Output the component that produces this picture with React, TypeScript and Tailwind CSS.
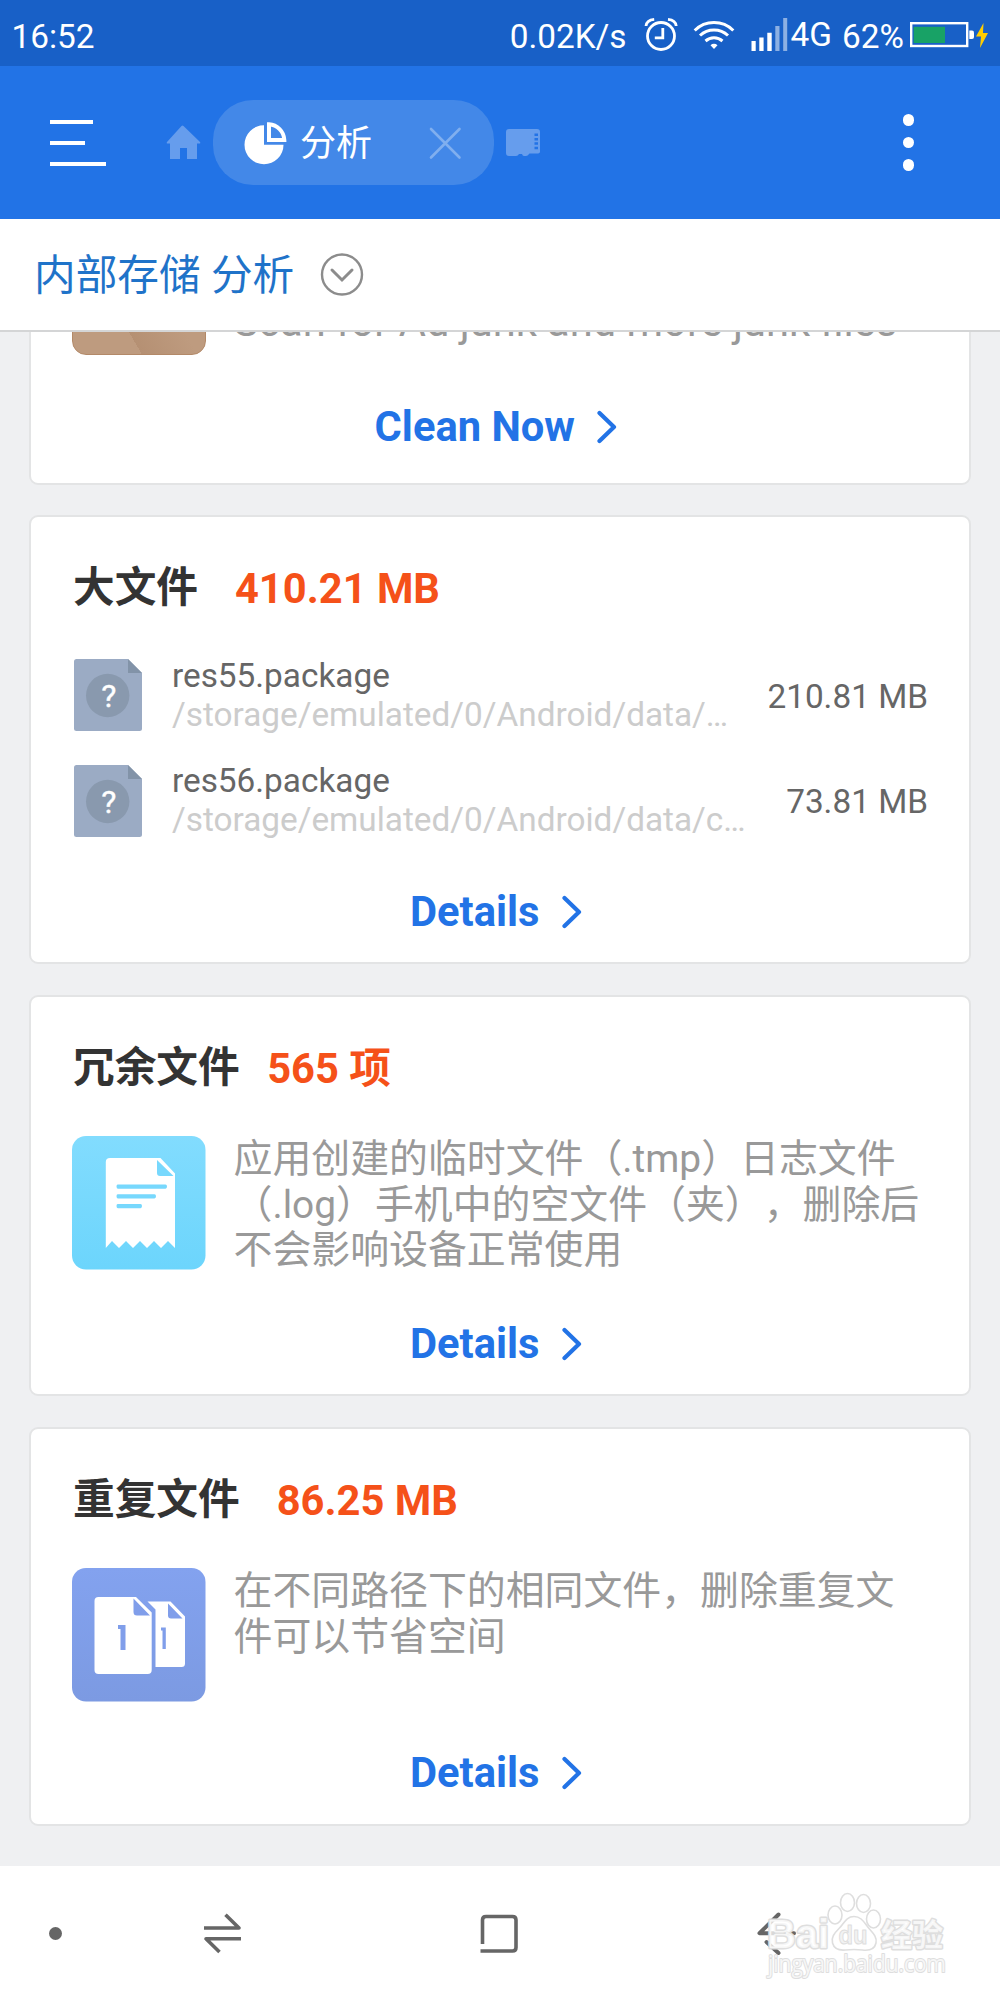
import type { ReactNode } from "react";

function StatusBar() {
  return (
    <div className="flex h-[66px] items-center bg-[#1860c7] pl-[11.500px] text-[33.33px] leading-[40px] text-white">
      <span className="pt-[7px]">16:52</span>
      <span className="ml-auto pt-[7px]">0.02K/s</span>
      <svg className="ml-[16px] h-[66px] w-[36px] shrink-0" viewBox="643 0 36 66" fill="none" stroke="#fff">
        <circle cx="661" cy="36" r="13.5" strokeWidth="2.8" />
        <path d="M662.8 28v9.800h-8" strokeWidth="2.800" />
        <path d="M646 26c.3-3.500 3-6.200 8.200-6.700M676.200 26c-.3-3.500-3-6.200-8.200-6.700" strokeWidth="2.800" />
      </svg>
      <svg className="ml-[14px] h-[66px] w-[42px] shrink-0" viewBox="693 0 42 66" fill="none" stroke="#fff" strokeWidth="3">
        <path d="M694.700 30.500a27.500 27.500 0 0 1 38.600 0M700 35.500a20.500 20.500 0 0 1 28 0M705.500 41a13 13 0 0 1 17 0" />
        <path d="M710.500 45.300a5 5 0 0 1 7 0l-3.500 3.700z" fill="#fff" stroke="none" />
      </svg>
      <svg className="ml-[15px] h-[66px] w-[38px] shrink-0" viewBox="750 0 38 66" fill="#fff">
        <path d="M751.500 41h4.200v10h-4.200zM759.300 37.500h4.300V51h-4.300zM767.300 32.700h4.400V51h-4.400z" />
        <path d="M775.300 26h4.200v25h-4.200zM783.200 18h4v33h-4z" opacity=".5" />
      </svg>
      <span className="ml-[3px] pt-[4px]">4G</span>
      <span className="ml-[10px] w-[62px] pt-[7px]">62%</span>
      <svg className="ml-[4px] mr-[10px] h-[66px] w-[82px] shrink-0" viewBox="908 0 82 66" fill="none">
        <rect x="911.200" y="23.200" width="56" height="22.800" stroke="#fff" strokeWidth="2.400" />
        <path d="M913.700 26.800H945v16.200h-31.300z" fill="#18a266" />
        <path d="M969.300 30.500h2.700q2 0 2 2v4.600q0 2-2 2h-2.700z" fill="#fff" />
        <path d="M983.500 23 976 36.500h5l-1 11.500L988 33h-5z" fill="#ffcd00" />
      </svg>
    </div>
  );
}

function Toolbar() {
  return (
    <div className="flex h-[153px] items-center bg-[#2273e6] pl-[50px]">
      <div className="flex w-[56px] flex-col gap-[16.500px] pt-[1px]">
        <i className="h-[4.500px] w-[43px] bg-white" />
        <i className="h-[4.500px] w-[35px] bg-white" />
        <i className="h-[4.500px] w-[56px] bg-white" />
      </div>
      <svg className="ml-[60px] h-[35px] w-[35px]" viewBox="166 125 35 35" fill="#669ded">
        <path d="M181.500 126q1-.8 2 0l16.500 16q1 1.500-1 1.500h-2V159h-10v-11h-7v11h-10v-15.500h-2q-2 0-1-1.500z" />
      </svg>
      <div className="ml-[11.500px] flex h-[85px] w-[281.500px] items-center rounded-[40px] bg-[#4388e8] pl-[30px]">
        <svg className="h-[44px] w-[44px]" viewBox="243 120 44 44" fill="#fff">
          <path d="M264 124.300a19.500 19.500 0 1 0 19.500 19.500H264z" />
          <path d="M269 123.300v15.600h15.300a16.500 16.500 0 0 0-15.300-15.600z" fill="none" stroke="#fff" strokeWidth="4" />
        </svg>
        <span className="ml-[13.500px] pt-[2px] text-[36px] leading-[44px] text-white">分析</span>
        <svg className="ml-[56px] h-[34px] w-[34px]" viewBox="0 0 34 34" stroke="#80afef" strokeWidth="2.600" strokeLinecap="round">
          <path d="m3 3 28.500 28.500M31.500 3 3 31.500" />
        </svg>
      </div>
      <svg className="ml-[12px] h-[28px] w-[34px]" viewBox="506 129 34 28">
        <path d="M509 129h28q3 0 3 3v19.500q0 2-3 2h-7.500q-2 2.500-3.500 2.500h-2q-1.500 0-2-2h-3q-1 2-3 2H509q-3 0-3-3v-21q0-3 3-3z" fill="#669ded" />
        <path d="M534.500 133.500h3.500v2.500h-3.500zM534.500 138h3.500v2.500h-3.500zM534.500 142.300h3.500v2.500h-3.500zM534.500 146.700h3.500v2.500h-3.500z" fill="#2273e6" />
      </svg>
      <div className="ml-auto mr-[86px] flex flex-col gap-[10.800px]">
        <i className="size-[11.500px] rounded-full bg-white" />
        <i className="size-[11.500px] rounded-full bg-white" />
        <i className="size-[11.500px] rounded-full bg-white" />
      </div>
    </div>
  );
}

function Card({ className, children }: { className: string; children: ReactNode }) {
  return (
    <section className={`mx-[29px] flex flex-col rounded-[9px] border-2 border-[#e3e4e5] bg-white ${className}`}>
      {children}
    </section>
  );
}

function Heading({ title, value, gap }: { title: string; value: string; gap: string }) {
  return (
    <h2 className="flex h-[60px] shrink-0 pl-[42px] text-[41.670px] font-bold text-[#333]">
      <span className="leading-[58px]">{title}</span>
      <span className={`leading-[60px] text-[#f55119] ${gap}`}>{value}</span>
    </h2>
  );
}

function Action({ label }: { label: string }) {
  return (
    <div className="mt-auto flex h-[60px] shrink-0 items-center justify-center gap-[22.500px] pr-[8px] text-[41.670px] leading-[60px] font-bold text-[#2273e6]">
      {label}
      <svg className="h-[34px] w-[20px]" viewBox="0 0 20 34" fill="none" stroke="#2273e6" strokeWidth="4.200" strokeLinecap="round" strokeLinejoin="round">
        <path d="m2.500 3 14.500 14-14.500 14" />
      </svg>
    </div>
  );
}

function FileRow({ name, path, size }: { name: string; path: string; size: string }) {
  return (
    <div className="flex h-[105.800px] items-start pr-[41px] pl-[43px] text-[33.330px] leading-[39px]">
      <div className="mt-[3.500px] flex h-[72px] w-[68px] shrink-0">
        <svg className="size-full" viewBox="0 0 68 72">
          <path d="M2.500 0H54l14 14v55.500q0 2.500-2.500 2.500h-63Q0 72 0 69.500v-67Q0 0 2.500 0z" fill="#9babc4" />
          <path d="M54 0v14h14z" fill="#8293a8" />
          <circle cx="33.700" cy="36.500" r="21.700" fill="#8999ae" />
          <text x="34.700" y="47.500" textAnchor="middle" fontSize="32" fontFamily="Roboto" fill="#fff" stroke="#fff" strokeWidth=".4">?</text>
        </svg>
      </div>
      <div className="ml-[30px] whitespace-nowrap">
        <div className="text-[#666]">{name}</div>
        <div className="text-[#ccc]">{path}</div>
      </div>
      <span className="mt-[21px] ml-auto whitespace-nowrap text-[#666]">{size}</span>
    </div>
  );
}

function Description({ icon, lines }: { icon: ReactNode; lines: string[] }) {
  return (
    <div className="flex h-[137px] pl-[41px]">
      {icon}
      <div className="ml-[28px] text-[38.890px] leading-[45.600px] whitespace-nowrap text-[#999] [text-spacing-trim:space-all]">
        {lines.map((l) => (
          <div key={l}>{l}</div>
        ))}
      </div>
    </div>
  );
}

function ReceiptIcon() {
  return (
    <svg className="h-[133.500px] w-[133.500px] shrink-0" viewBox="72 1136 133.500 133.500">
      <defs>
        <linearGradient id="sky" x1="0" y1="0" x2="0" y2="1">
          <stop stopColor="#82dcfe" />
          <stop offset="1" stopColor="#6cd5fc" />
        </linearGradient>
      </defs>
      <rect x="72" y="1136" width="133.500" height="133.500" rx="14" fill="url(#sky)" />
      <path d="M110 1158h50.500l14.500 15.500v74.500l-7-7-7 7-7-7-7 7-7-7-7 7-7-7-7 7-7-7-6.200 7V1162q0-4 4.200-4z" fill="#fff" />
      <path d="M157 1160v13q0 3 3 3h13.500zM118 1184.500h47.500q1.500 0 1.500 2t-1.500 2.300H118q-1.500 0-1.500-2.300t1.500-2zM118 1194.300h36.500q1.500 0 1.500 2t-1.500 2.300H118q-1.500 0-1.500-2.300t1.500-2zM118 1204h22.500q1.500 0 1.500 2t-1.500 2.300H118q-1.500 0-1.500-2.300t1.500-2z" fill="#77d8fd" />
    </svg>
  );
}

function DuplicateIcon() {
  return (
    <svg className="h-[133.500px] w-[133.500px] shrink-0" viewBox="72 1568.500 133.500 133.500">
      <defs>
        <linearGradient id="peri" x1="0" y1="0" x2="0" y2="1">
          <stop stopColor="#83a2ef" />
          <stop offset="1" stopColor="#7c9ae2" />
        </linearGradient>
      </defs>
      <rect x="72" y="1568.500" width="133.500" height="133.500" rx="14" fill="url(#peri)" />
      <path d="M98.500 1597.500h37.500l15.700 15.500v57.500q0 4-4 4H98.500q-4 0-4-4v-69q0-4 4-4z" fill="#fff" />
      <path d="M147.500 1602h23l14.500 15v47q0 3.500-3.500 3.500h-26V1610z" fill="#fff" />
      <path d="M133.500 1599v13.500q0 3.500 3.500 3.500h13zM168 1604v12q0 3 3 3h11.500z" fill="#809eea" />
      <path d="M118 1625.500h7.500v25h-5v-21H118zM161 1628h4.800v21.500h-3.300v-18.500H161z" fill="#809eea" />
    </svg>
  );
}

function Watermark() {
  return (
    <svg className="absolute right-[50px] bottom-[18px] h-[98px] w-[190px]" viewBox="760 1884 190 98" fill="#fff" fillOpacity=".75" stroke="#dedede" strokeWidth="1.600" strokeLinejoin="round">
      <g fontFamily="Liberation Sans" fontWeight="700" paintOrder="stroke" strokeWidth="3">
        <text x="767" y="1948" fontSize="41" textLength="62" lengthAdjust="spacingAndGlyphs">Bai</text>
        <text x="881" y="1946" fontSize="31" fontFamily="Noto Sans CJK SC" textLength="62">经验</text>
        <text x="768" y="1972" fontSize="23" fontFamily="Open Sans" fontWeight="400" strokeWidth="2" textLength="178" lengthAdjust="spacingAndGlyphs">jingyan.baidu.com</text>
      </g>
      <ellipse cx="835" cy="1915" rx="7" ry="9" />
      <ellipse cx="847.500" cy="1902.500" rx="7" ry="9" />
      <ellipse cx="863.500" cy="1903.500" rx="7" ry="9" />
      <ellipse cx="873.500" cy="1919" rx="7" ry="9" />
      <path d="M854 1916.500c-8 0-10 7-15 12-5 5-8 9-6.500 14.500 2 7 8 7.500 13 7 6-.8 11-.8 17 0 5 .6 12 0 13.500-7 1.300-6-3-10-7-14.500-4.500-5-7-12-15-12z" />
      <text x="838.500" y="1944" fontSize="26" fontFamily="Liberation Sans" fontWeight="700" textLength="29" lengthAdjust="spacingAndGlyphs" fill="#eee" strokeWidth="1">du</text>
    </svg>
  );
}

function NavBar() {
  return (
    <div className="relative flex h-[134px] items-center bg-white text-[#666]">
      <i className="ml-[49px] size-[13px] rounded-full bg-[#666]" />
      <svg className="ml-[139.500px] h-[42px] w-[40px]" viewBox="202 1912 40 42" fill="none" stroke="currentColor" strokeWidth="3.600">
        <path d="M204 1928h35l-13.500-13.300M241 1938.800h-35l13.500 13.200" strokeLinejoin="round" />
      </svg>
      <svg className="ml-[237.500px] h-[42px] w-[42px]" viewBox="480 1912 42 42" fill="none" stroke="currentColor" strokeWidth="3.600">
        <path d="M483.500 1944v-24q0-3.500 3.500-3.500h26.500q3.500 0 3.500 3.500v27.500q0 3.500-3.500 3.500h-32" />
      </svg>
      <svg className="ml-[235px] h-[44px] w-[42px]" viewBox="757 1911 42 44" fill="none" stroke="currentColor" strokeWidth="4" strokeLinecap="round" strokeLinejoin="round">
        <path d="m779.500 1914.500-19 18.700H795M767.500 1942l12 11" />
      </svg>
      <Watermark />
    </div>
  );
}

export default function App() {
  return (
    <div className="flex h-[2000px] w-[1000px] flex-col overflow-hidden bg-[#eff0f2] font-['Roboto','Noto_Sans_CJK_SC',sans-serif]">
      <StatusBar />
      <Toolbar />
      <div className="flex h-[113px] shrink-0 items-center border-b-2 border-[#d4d5d6] bg-white pl-[34px]">
        <h1 className="pt-[2px] text-[41.670px] leading-[60px] text-[#1f73c9]">内部存储 分析</h1>
        <svg className="ml-[26px] h-[44px] w-[44px]" viewBox="0 0 44 44" fill="none" stroke="#8c8c8c" strokeWidth="2.400" strokeLinecap="round">
          <circle cx="22" cy="21.500" r="20" />
          <path d="m12 17 10 10 10-10" strokeWidth="3" />
        </svg>
      </div>
      <main className="flex h-[1534px] shrink-0 flex-col overflow-hidden">
        <Card className="-mt-[130px] h-[283px] shrink-0 pt-[17px] pb-[26px]">
          <div className="flex h-[133.500px] items-end pl-[41px]">
            <div className="h-[133.500px] w-[133.500px] shrink-0 rounded-[14px] border border-[#b38968] bg-[linear-gradient(60deg,#be9b7f_33%,#b59073_33%,#be9b7f_60%)]" />
            <div className="mb-[4px] ml-[28px] text-[41.670px] leading-[58px] whitespace-nowrap text-[#999]">
              Scan for Ad junk and more junk files
            </div>
          </div>
          <Action label="Clean Now" />
        </Card>
        <Card className="mt-[30px] h-[449px] shrink-0 pt-[42px] pb-[20px]">
          <Heading title="大文件" value="410.21 MB" gap="ml-[37px]" />
          <div className="mt-[36.500px]">
            <FileRow name="res55.package" path="/storage/emulated/0/Android/data/…" size="210.81 MB" />
            <FileRow name="res56.package" path="/storage/emulated/0/Android/data/c…" size="73.81 MB" />
          </div>
          <Action label="Details" />
        </Card>
        <Card className="mt-[31px] h-[401px] shrink-0 pt-[42px] pb-[20px]">
          <Heading title="冗余文件" value="565 项" gap="ml-[27.500px]" />
          <div className="mt-[37px]">
            <Description
              icon={<ReceiptIcon />}
              lines={["应用创建的临时文件（.tmp）日志文件", "（.log）手机中的空文件（夹），删除后", "不会影响设备正常使用"]}
            />
          </div>
          <Action label="Details" />
        </Card>
        <Card className="mt-[31px] h-[399px] shrink-0 pt-[42px] pb-[21px]">
          <Heading title="重复文件" value="86.25 MB" gap="ml-[37px]" />
          <div className="mt-[37px]">
            <Description icon={<DuplicateIcon />} lines={["在不同路径下的相同文件，删除重复文", "件可以节省空间"]} />
          </div>
          <Action label="Details" />
        </Card>
      </main>
      <NavBar />
    </div>
  );
}
